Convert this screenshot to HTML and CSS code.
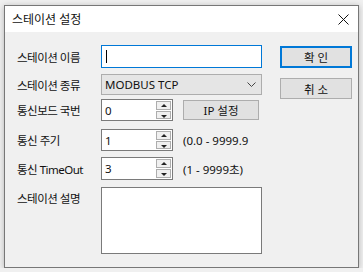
FILE: index.html
```html
<!DOCTYPE html>
<html lang="ko">

<head>
    <meta charset="UTF-8">
    <title>스테이션 설정</title>
    <link rel="stylesheet" href="styles.css">
</head>

<body>
    <div class="dialog">
        <!-- 제목 표시줄 -->
        <div class="titlebar">
            <span class="title">스테이션 설정</span>
            <svg class="close" width="11" height="11" viewBox="0 0 11 11">
                <path d="M0.5 0.5 L10.5 10.5 M10.5 0.5 L0.5 10.5" stroke="#111" stroke-width="1" fill="none"/>
            </svg>
        </div>

        <div class="content">
            <div class="form">
                <div class="row row-name">
                    <label>스테이션 이름</label>
                    <div class="field text focus"><span class="caret"></span></div>
                </div>
                <div class="row row-kind">
                    <label>스테이션 종류</label>
                    <div class="field combo">
                        <span>MODBUS TCP</span>
                        <svg width="9" height="5" viewBox="0 0 9 5">
                            <polyline points="0.5,0.5 4.5,4.5 8.5,0.5" stroke="#444" fill="none"/>
                        </svg>
                    </div>
                </div>
                <div class="row row-addr">
                    <label>통신보드 국번</label>
                    <div class="field spin"><span>0</span>
                        <div class="spin-btns"><b class="up"></b><b class="down"></b></div>
                    </div>
                    <button class="btn ip">IP 설정</button>
                </div>
                <div class="row row-cycle">
                    <label>통신 주기</label>
                    <div class="field spin"><span>1</span>
                        <div class="spin-btns"><b class="up"></b><b class="down"></b></div>
                    </div>
                    <span class="range">(0.0 - 9999.9</span>
                </div>
                <div class="row row-timeout">
                    <label>통신 TimeOut</label>
                    <div class="field spin"><span>3</span>
                        <div class="spin-btns"><b class="up"></b><b class="down"></b></div>
                    </div>
                    <span class="range">(1 - 9999초)</span>
                </div>
                <div class="row row-desc">
                    <label>스테이션 설명</label>
                    <div class="field memo"></div>
                </div>
            </div>

            <div class="buttons">
                <button class="btn ok">확 인</button>
                <button class="btn cancel">취 소</button>
            </div>
        </div>
    </div>
</body>

</html>
```

FILE: styles.css
```css
/* 기본 */
body {
    margin: 0;
    background-color: #f0f0f0;
    font-family: "Noto Sans", "Noto Sans CJK KR", sans-serif;
    font-size: 12px;
    color: #111;
}

/* 대화상자 창 */
.dialog {
    margin: 5px 0 0 4px;
    width: 355px;
    height: 263px;
    box-sizing: border-box;
    border: 1px solid #777;
    background-color: #f0f0f0;
    box-shadow: 0 1px 6px rgba(0, 0, 0, 0.25);
}

.titlebar {
    height: 26px;
    background-color: #fff;
    display: flex;
    align-items: center;
    justify-content: space-between;
    padding: 0 9px 0 7px;
}

.title {
    font-size: 12px;
}

/* 내용 */
.content {
    display: flex;
    padding: 13px 0 0 12px;
}

.form {
    width: 250px;
}

.row {
    display: flex;
    align-items: center;
}

.row label {
    width: 84px;
    flex: none;
    font-size: 11.5px;
    letter-spacing: -0.5px;
}

.row-name { height: 23px; }
.row-kind { height: 21px; margin-top: 6px; }
.row-addr { height: 22px; margin-top: 4px; }
.row-cycle { height: 22px; margin-top: 8px; }
.row-timeout { height: 23px; margin-top: 6px; }
.row-desc { margin-top: 7px; align-items: flex-start; }
.row-desc label { padding-top: 3px; }

/* 입력 칸 */
.field {
    box-sizing: border-box;
    height: 100%;
    border: 1px solid #7a7a7a;
    background-color: #fff;
    display: flex;
    align-items: center;
    padding-left: 3px;
    font-size: 11.5px;
}

.text {
    width: 161px;
}

.text.focus {
    border-color: #0078d7;
}

.caret {
    width: 1px;
    height: 13px;
    margin-left: 1px;
    background-color: #000;
}

.combo {
    width: 161px;
    background-color: #e5e5e5;
    border-color: #adadad;
    justify-content: space-between;
    padding: 0 5px 0 3px;
}

.spin {
    width: 72px;
    position: relative;
}

.spin-btns {
    position: absolute;
    right: 1px;
    top: 1px;
    bottom: 1px;
    width: 15px;
    display: flex;
    flex-direction: column;
    gap: 1px;
}

.spin-btns b {
    flex: 1;
    border: 1px solid #adadad;
    background-color: #f0f0f0;
    position: relative;
}

.spin-btns b::after {
    content: "";
    position: absolute;
    left: 4px;
    border-left: 3px solid transparent;
    border-right: 3px solid transparent;
}

.spin-btns .up::after {
    top: 2px;
    border-bottom: 3px solid #222;
}

.spin-btns .down::after {
    top: 3px;
    border-top: 3px solid #222;
}

.range {
    margin-left: 10px;
    font-size: 11.5px;
}

.memo {
    width: 161px;
    height: 67px;
}

/* 버튼 */
.btn {
    box-sizing: border-box;
    font-family: inherit;
    font-size: 11.5px;
    color: #111;
    background-color: #e1e1e1;
    border: 1px solid #adadad;
    padding: 0;
}

.ip {
    width: 76px;
    height: 20px;
    margin-left: 10px;
}

.buttons {
    display: flex;
    flex-direction: column;
    margin-left: 13px;
}

.ok {
    width: 72px;
    height: 22px;
    margin-top: 1px;
    border: 2px solid #0078d7;
}

.cancel {
    width: 72px;
    height: 21px;
    margin-top: 10px;
}
```
